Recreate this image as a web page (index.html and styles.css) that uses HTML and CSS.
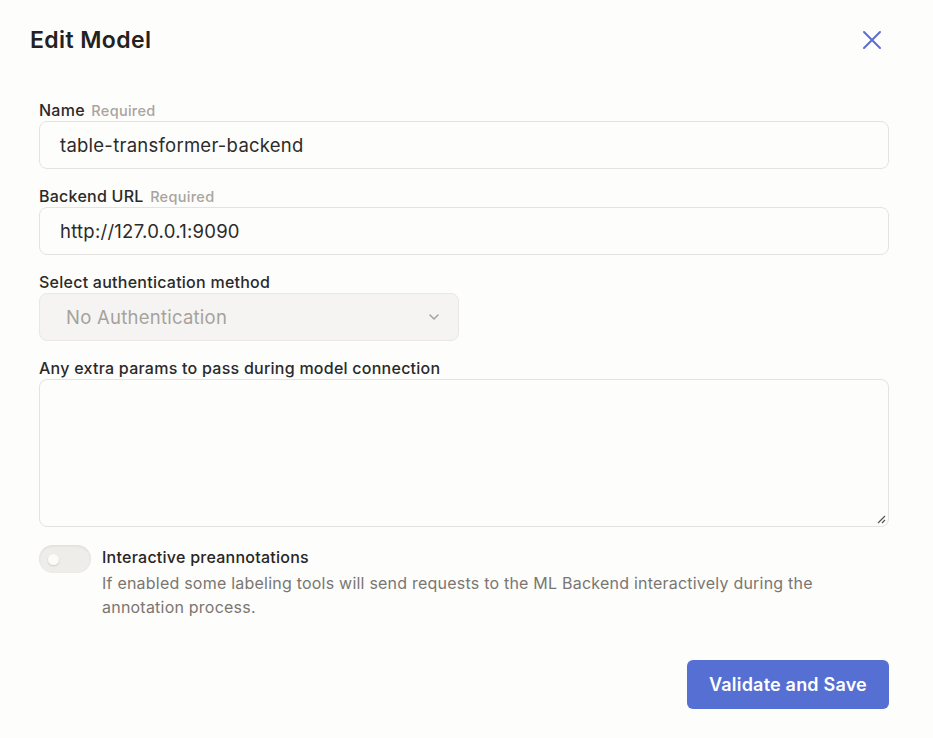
FILE: index.html
```html
<!DOCTYPE html>
<html lang="en">
<head>
<meta charset="utf-8">
<title>Edit Model</title>
<link rel="stylesheet" href="styles.css">
</head>
<body>
<div class="modal">
  <header class="header">
    <h1 class="title">Edit Model</h1>
    <button class="close" aria-label="Close">
      <svg width="20" height="20" viewBox="0 0 20 20"><path d="M2 2 L18 18 M18 2 L2 18" stroke="#5b6fd0" stroke-width="2" stroke-linecap="round" fill="none"/></svg>
    </button>
  </header>
  <form class="form">
    <div class="field">
      <label class="label">Name <span class="req">Required</span></label>
      <div class="input">table-transformer-backend</div>
    </div>
    <div class="field">
      <label class="label">Backend URL <span class="req">Required</span></label>
      <div class="input">http://127.0.0.1:9090</div>
    </div>
    <div class="field">
      <label class="label">Select authentication method</label>
      <div class="select">
        <span>No Authentication</span>
        <svg width="12" height="8" viewBox="0 0 12 8"><path d="M2 2 L6 6 L10 2" stroke="#a7a39d" stroke-width="1.6" fill="none" stroke-linecap="round" stroke-linejoin="round"/></svg>
      </div>
    </div>
    <div class="field">
      <label class="label">Any extra params to pass during model connection</label>
      <div class="textarea">
        <svg class="grip" width="10" height="10" viewBox="0 0 10 10"><path d="M9 2 L2 9 M9 6 L6 9" stroke="#555" stroke-width="1.2" fill="none"/></svg>
      </div>
    </div>
    <div class="toggle-row">
      <div class="toggle"><span class="knob"></span></div>
      <div class="toggle-text">
        <div class="toggle-title">Interactive preannotations</div>
        <div class="toggle-desc">If enabled some labeling tools will send requests to the ML Backend interactively during the annotation process.</div>
      </div>
    </div>
    <div class="actions">
      <button type="button" class="primary">Validate and Save</button>
    </div>
  </form>
</div>
</body>
</html>
```
FILE: styles.css
```css
* { box-sizing: border-box; }
html, body {
  margin: 0;
  background: #fdfdfc;
  font-family: "Inter", "Noto Sans", sans-serif;
  color: #262626;
}
.modal {
  width: 933px;
  height: 738px;
  padding: 0 44px 0 39px;
}
.header {
  display: flex;
  align-items: center;
  justify-content: space-between;
  height: 80px;
  margin-left: -9px;
  margin-right: 7px;
}
.title {
  margin: 0;
  font-size: 23px;
  font-weight: 600;
  letter-spacing: 0.4px;
  color: #222;
}
.close {
  background: none;
  border: 0;
  padding: 0;
  width: 20px;
  height: 20px;
  display: flex;
}
.form {
  display: flex;
  flex-direction: column;
  gap: 16px;
  padding-top: 19px;
}
.field {
  display: flex;
  flex-direction: column;
}
.label {
  display: block;
  height: 22px;
  font-size: 16px;
  font-weight: 500;
  line-height: 22px;
  letter-spacing: 0.25px;
  color: #2a2a2a;
}
.req {
  font-size: 14.5px;
  line-height: 1;
  font-weight: 500;
  letter-spacing: 0.3px;
  color: #a8a49e;
  margin-left: 2px;
}
.input {
  height: 48px;
  border: 1px solid #e6e3de;
  border-radius: 8px;
  background: #fdfdfc;
  padding: 0 20px;
  display: flex;
  align-items: center;
  font-size: 18.5px;
  letter-spacing: 0.25px;
  color: #2b2b2b;
}
.select {
  width: 420px;
  height: 48px;
  border: 1px solid #eae8e4;
  border-radius: 8px;
  background: #f5f4f2;
  padding: 0 18px 0 26px;
  display: flex;
  align-items: center;
  justify-content: space-between;
  font-size: 18.5px;
  letter-spacing: 0.25px;
  color: #a6a29c;
}
.textarea {
  position: relative;
  height: 148px;
  border: 1px solid #e6e3de;
  border-radius: 8px;
  background: #fdfdfc;
}
.grip {
  position: absolute;
  right: 2px;
  bottom: 2px;
}
.toggle-row {
  display: flex;
  gap: 11px;
  margin-top: 2px;
}
.toggle {
  flex: none;
  width: 52px;
  height: 28px;
  border-radius: 14px;
  background: #efedea;
  box-shadow: inset 0 1px 3px rgba(0,0,0,0.08);
  display: flex;
  align-items: center;
  padding-left: 9px;
}
.knob {
  width: 11px;
  height: 11px;
  border-radius: 50%;
  background: #fbfbfa;
  box-shadow: 0 1px 2px rgba(0,0,0,0.15);
}
.toggle-title {
  font-size: 16px;
  font-weight: 500;
  line-height: 24px;
  letter-spacing: 0.25px;
  margin-bottom: 2px;
  color: #262626;
}
.toggle-desc {
  font-size: 16px;
  line-height: 24px;
  letter-spacing: 0.22px;
  color: #7a7671;
  max-width: 760px;
}
.actions {
  display: flex;
  justify-content: flex-end;
  margin-top: 25px;
}
.primary {
  width: 202px;
  height: 49px;
  border: 0;
  border-radius: 6px;
  background: #566fd3;
  color: #fff;
  font-family: inherit;
  font-size: 18px;
  font-weight: 600;
  letter-spacing: 0.2px;
}
```
